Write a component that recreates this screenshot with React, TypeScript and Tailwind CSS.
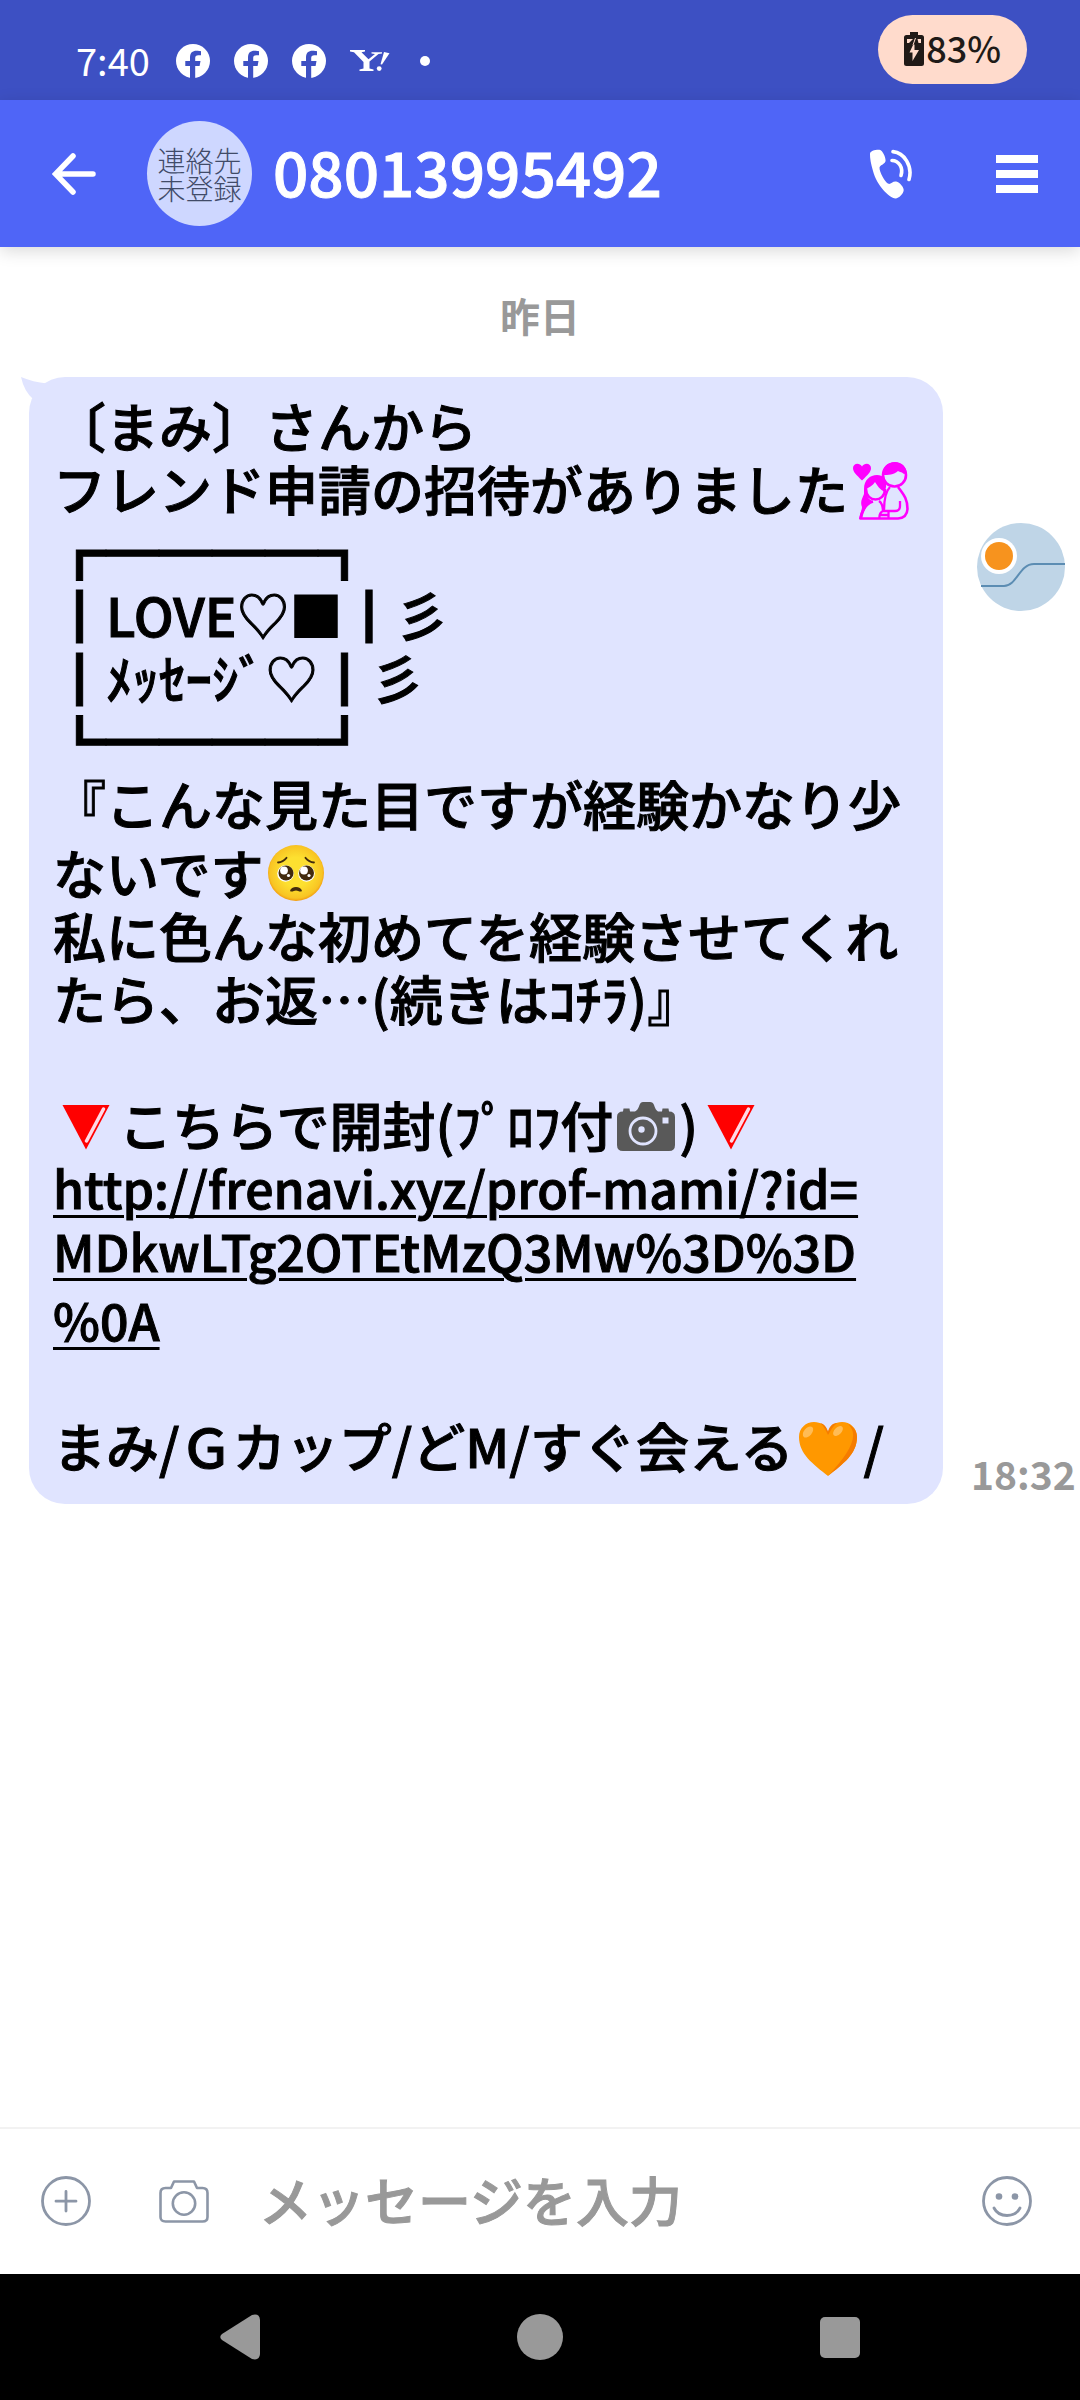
import React from 'react';

function FacebookIcon() {
  return (
    <svg viewBox="0 0 34 34" className="size-[34px]" role="img" aria-label="Facebook">
      <circle cx="17" cy="17" r="17" fill="#fff" />
      <path
        d="M14 34V22H9.300V17H14V13.500C14 8.700 16.500 6.700 20.500 6.700C22.500 6.700 24 6.900 25 7.200V11.300H22.300C20.200 11.300 19.200 12.300 19.200 14V17H24.500L23.600 22H19.200V34Z"
        fill="#3d50c3"
      />
    </svg>
  );
}

function YahooIcon() {
  return (
    <svg viewBox="0 0 40 22" className="h-[22px] w-10" role="img" aria-label="Yahoo">
      <g fill="#fff">
        <path d="M0 0H15V1.600L11.500 2.200L18.500 9.200L25 4L21.500 3.600V2.200H32V3.600L28.500 4L19.500 11.500V18.500L23.500 19.500V21H9.500V19.500L13.500 18.500V12L4 2.200L0 1.600Z" />
        <path d="M34 2L39.500 3.200L32 14.500L30.500 14.200Z" />
        <circle cx="29.200" cy="18.600" r="2.400" />
      </g>
    </svg>
  );
}

function BatteryIcon() {
  return (
    <svg viewBox="0 0 20 34" className="h-[34px] w-5" aria-hidden="true">
      <path d="M6 0H14V3H17.500Q20 3 20 5.500V31.500Q20 34 17.500 34H2.500Q0 34 0 31.500V5.500Q0 3 2.500 3H6Z" fill="#201a17" />
      <path d="M3 7H9L5 11H3ZM13.500 7H17V11H14.500ZM10.500 12.500V18H15L8.500 29V20.500H5.500L9 13Z" fill="#ffdbcc" />
      <path d="M11.500 6L9 13" stroke="#ffdbcc" strokeWidth="1" />
    </svg>
  );
}

function BackIcon() {
  return (
    <svg viewBox="0 0 44 44" className="size-11" fill="none" stroke="#fff" strokeWidth="5.500" strokeLinecap="round" aria-hidden="true">
      <path d="M21 4L3.500 22L21 40M4 22H41" />
    </svg>
  );
}

function CallIcon() {
  return (
    <svg viewBox="0 0 44 50" className="h-[50px] w-11" aria-hidden="true">
      <path
        d="M1 5C1 2 6 .6 10.500 .8C14 1.800 16.500 8 16.600 11.500C16.600 15 11 16 10.500 18.500C10.300 23 16 33.500 19.500 34.800C22 35.500 24 31.500 28 32.800C31 34 34.500 38 34.700 41C34.500 45 30 49 26.500 49.500C20 48.500 8 37 4 22C2 15 .8 9 1 5Z"
        fill="#fff"
      />
      <g fill="none" stroke="#fff" strokeWidth="3.600" strokeLinecap="round">
        <path d="M24 2.600C35 3.500 44 17 40 30.500" />
        <path d="M23 11.500C30 11.500 34.500 19 32 26.500" />
      </g>
    </svg>
  );
}

function MenuIcon() {
  return (
    <svg viewBox="0 0 42 38" className="h-[38px] w-[42px]" fill="#fff" aria-hidden="true">
      <path d="M0 0H42V8H0ZM0 15H42V23H0ZM0 30H42V38H0Z" />
    </svg>
  );
}

function FamilyEmoji() {
  return (
    <svg viewBox="0 0 56 58" className="mt-1 ml-[5px] h-[58px] w-14" role="img" aria-label="couple with heart">
      <path d="M9 18.500C3 12.500 0 10 0 6C0 1 6.500 0 9 4.500C11.500 0 18 1 18 6C18 10 15 12.500 9 18.500Z" fill="#f0f" />
      <circle cx="41.500" cy="13" r="11.500" fill="none" stroke="#f0f" strokeWidth="2.600" />
      <path d="M30 13C29 5 35 0 42 0C49 0 53.500 5 53.500 11L51 12C48 9.500 46 10 45 9C41 13 35 13 30 13Z" fill="#f0f" />
      <path d="M11 27C11 18 17 13 24 13C31 13 34 18 33 25L32 30C27 28 24 23 22 20C20 24 15 25 13 28C13 34 16 38 20 39C14 42 11 48 9 57H6C7 52 9 48 9 45C7 40 9 37 11 32Z" fill="#f0f" />
      <g fill="none" stroke="#f0f" strokeWidth="2.600" strokeLinejoin="round">
        <path d="M13 27C13 41 32 41 32 27" />
        <path d="M20 39.500C12 42 9 48 7.500 56.500H45Q54 56 54.500 47C54.500 38 52 34 45 25" />
        <path d="M37 25C32 30 31 38 31 49M26 39C29 41 30 46 30 50M47 39V44Q47 49 42 49H30Q26 51 26.500 56M26 53H36M35.500 49V56" strokeWidth="2.300" />
      </g>
    </svg>
  );
}

function PleadingEmoji() {
  return (
    <svg viewBox="0 0 56 56" className="mb-[3px] ml-[5px] size-14" role="img" aria-label="pleading face">
      <defs>
        <radialGradient id="face" cx="50%" cy="48%" r="52%">
          <stop offset="0.5" stopColor="#fde030" />
          <stop offset="0.9" stopColor="#f8c423" />
          <stop offset="1" stopColor="#f29b10" />
        </radialGradient>
      </defs>
      <circle cx="28" cy="28" r="28" fill="url(#face)" />
      <g fill="#fff">
        <circle cx="17.500" cy="28.500" r="8.300" />
        <circle cx="38.500" cy="28.500" r="8.300" />
      </g>
      <g fill="#422b0d">
        <circle cx="18" cy="28" r="7.500" />
        <circle cx="38.500" cy="28" r="7.500" />
      </g>
      <g fill="#fff">
        <circle cx="16" cy="25.500" r="3.900" />
        <circle cx="36" cy="25.500" r="3.900" />
        <circle cx="20.500" cy="30.500" r="1.600" />
        <circle cx="41" cy="30.500" r="1.600" />
      </g>
      <path d="M10 17.500Q15 17 18.500 12.800M37.500 12.800Q41 17 46 17.500" fill="none" stroke="#422b0d" strokeWidth="1.800" strokeLinecap="round" />
      <path d="M22 46C23 40.500 33 40.500 34 46C32 47.500 30 45.500 28 45.500C26 45.500 24 47.500 22 46Z" fill="#422b0d" />
    </svg>
  );
}

function TriangleEmoji() {
  return (
    <svg viewBox="0 0 48 46" className="mx-[9px] mt-1 h-[46px] w-12" role="img" aria-label="red triangle pointing down">
      <path d="M.5 1H47.500L24 45.500Z" fill="#f00" />
      <path d="M41.500 5L24.500 37" stroke="#ffd9e6" strokeWidth="3.500" strokeLinecap="round" />
    </svg>
  );
}

function CameraEmoji() {
  return (
    <svg viewBox="0 0 58 49" className="mx-1 mt-1 h-[49px] w-[58px]" role="img" aria-label="camera">
      <path d="M0 15Q0 9.500 6 9.500L6.500 6.500H12.500L13 9.500H18Q21 8 22.500 3Q23.500 0 26 0H33Q36 0 37 3Q38.500 8 41 9.500H45L45.500 6.500H51.500L52 9.500Q58 9.500 58 15V43Q58 49 52 49H6Q0 49 0 43Z" fill="#595959" />
      <circle cx="26" cy="29" r="13" fill="none" stroke="#e0e4ff" strokeWidth="2.800" />
      <circle cx="24.500" cy="27.500" r="3.200" fill="#e0e4ff" />
      <path d="M45.500 15.500H51.500V21.500H45.500Z" fill="#e0e4ff" />
    </svg>
  );
}

function HeartEmoji() {
  return (
    <svg viewBox="0 0 58 54" className="mx-[6px] mt-[6px] h-[54px] w-[58px]" role="img" aria-label="orange heart">
      <path d="M29 54C14 42 0 32 0 15C0 6 7 0 15 0C22 0 27 4 29 10C31 4 36 0 43 0C51 0 58 6 58 15C58 32 44 42 29 54Z" fill="#ff9800" />
      <path d="M49 2C61 13 51 30 29 54C44 42 58 32 58 15C58 9 54 4 49 2ZM29 10C30 5 33 1 38 1C34 4 32 8 29 13C27 9 25 4 21 1C26 2 28 6 29 10Z" fill="#f57c00" />
      <g fill="#ffbc55">
        <ellipse cx="9" cy="10" rx="6.500" ry="4" transform="rotate(-50 9 10)" />
        <ellipse cx="39" cy="9" rx="6" ry="3.500" transform="rotate(-45 39 9)" />
      </g>
    </svg>
  );
}

function AssistBadge() {
  return (
    <svg viewBox="0 0 88 88" className="size-[88px]" aria-hidden="true">
      <circle cx="44" cy="44" r="44" fill="#bfd5e7" />
      <path d="M4 63H27C40 63 42 41 57 41H88" fill="none" stroke="#5c8db3" strokeWidth="2" />
      <circle cx="22" cy="33" r="18" fill="#fff" />
      <circle cx="22" cy="33" r="14" fill="#f7931e" />
    </svg>
  );
}

function PlusIcon() {
  return (
    <svg viewBox="0 0 50 50" className="size-[50px]" fill="none" stroke="#8c96a7" strokeWidth="2.800" strokeLinecap="round" aria-hidden="true">
      <circle cx="25" cy="25" r="23.500" />
      <path d="M25 15.500V35M15 25.200H35" />
    </svg>
  );
}

function CameraIcon() {
  return (
    <svg viewBox="0 0 50 44" className="h-11 w-[50px]" fill="none" stroke="#8c96a7" strokeWidth="2.600" strokeLinejoin="round" aria-hidden="true">
      <path d="M1.500 14Q1.500 9 6.500 9H12L15 2.500H35L38 9H43.500Q48.500 9 48.500 14V38Q48.500 42.500 43.500 42.500H6.500Q1.500 42.500 1.500 38Z" />
      <circle cx="25" cy="24.500" r="11.200" />
    </svg>
  );
}

function SmileIcon() {
  return (
    <svg viewBox="0 0 50 50" className="size-[50px]" fill="none" stroke="#8c96a7" strokeWidth="2.800" strokeLinecap="round" aria-hidden="true">
      <circle cx="25" cy="25" r="23.500" />
      <path d="M12 32C17 42 33 42 38 32" />
      <g fill="#8c96a7" stroke="none">
        <circle cx="17" cy="20.500" r="3.300" />
        <circle cx="33" cy="20.500" r="3.300" />
      </g>
    </svg>
  );
}

function StatusBar() {
  return (
    <div className="flex h-[100px] items-center bg-[#3d50c3] pr-[53px] pl-[76px]">
      <span className="w-[100px] pt-5 text-[38px] leading-10 text-white">7:40</span>
      <div className="flex items-center gap-6 pt-[22px]">
        <FacebookIcon />
        <FacebookIcon />
        <FacebookIcon />
        <YahooIcon />
        <span className="ml-[6px] size-[10px] rounded-full bg-white" />
      </div>
      <div className="mb-[2px] ml-auto flex h-[69px] items-center gap-[2px] rounded-full bg-[#ffdbcc] px-[26px] text-[36px] font-medium text-[#201a17]">
        <BatteryIcon />
        <span className="pb-1">83%</span>
      </div>
    </div>
  );
}

function ChatHeader() {
  return (
    <header className="relative flex h-[147px] items-center bg-[#4f65f7] pr-[42px] pl-[52px] shadow-[0_4px_16px_rgba(0,0,0,0.15)]">
      <button type="button" aria-label="戻る">
        <BackIcon />
      </button>
      <div className="ml-[51px] flex size-[105px] shrink-0 flex-col items-center justify-center rounded-full bg-[#ced7ff] text-[28px] leading-7 font-light text-[#414b68]">
        <span>連絡先</span>
        <span>未登録</span>
      </div>
      <h1 className="ml-[21px] pb-2 text-[62px] leading-none font-medium text-white [-webkit-text-stroke:1px_currentColor]">08013995492</h1>
      <button type="button" aria-label="電話をかける" className="ml-auto">
        <CallIcon />
      </button>
      <button type="button" aria-label="メニュー" className="ml-[83px]">
        <MenuIcon />
      </button>
    </header>
  );
}

function Line({ children }: { children?: React.ReactNode }) {
  return <div className="flex h-[63px] items-center whitespace-pre">{children}</div>;
}

function TallLine({ children }: { children?: React.ReactNode }) {
  return <div className="flex h-[69px] items-end whitespace-pre">{children}</div>;
}

function Message() {
  return (
    <article className="relative min-w-0 flex-1 rounded-[36px] bg-[#e0e4ff] pt-[17px] pb-[27px] pl-6 text-[53px] leading-[63px] font-medium text-black [-webkit-text-stroke:1px_currentColor]">
      <svg viewBox="0 0 26 24" className="absolute top-0 -left-2 h-6 w-[26px]" aria-hidden="true">
        <path d="M0 0Q12 5 26 6.500L12 22Q3 14 0 0Z" fill="#e0e4ff" />
      </svg>
      <Line>〔まみ〕さんから</Line>
      <Line>フレンド申請の招待がありました<FamilyEmoji /></Line>
      <Line>┏━━━━┓</Line>
      <Line>┃LOVE♡■┃彡</Line>
      <Line>┃ﾒｯｾｰｼﾞ♡┃彡</Line>
      <Line>┗━━━━┛</Line>
      <Line>『こんな見た目ですが経験かなり少</Line>
      <TallLine>ないです<PleadingEmoji /></TallLine>
      <Line>私に色んな初めてを経験させてくれ</Line>
      <Line>たら、お返…(続きはｺﾁﾗ)』</Line>
      <Line />
      <Line><TriangleEmoji />こちらで開封(ﾌﾟﾛﾌ付<CameraEmoji />)<TriangleEmoji /></Line>
      <a href="#profile" className="block text-[50px] underline decoration-[3px] underline-offset-[6px]">
        <Line>http://frenavi.xyz/prof-mami/?id=</Line>
        <Line>MDkwLTg2OTEtMzQ3Mw%3D%3D</Line>
        <TallLine>%0A</TallLine>
      </a>
      <Line />
      <Line>まみ/Ｇカップ/どM/すぐ会える<HeartEmoji />/</Line>
    </article>
  );
}

function Composer() {
  return (
    <form className="flex h-[147px] items-center border-t-2 border-[#f2f2f2] bg-white pr-12 pb-[2px] pl-[41px]">
      <button type="button" aria-label="追加">
        <PlusIcon />
      </button>
      <button type="button" aria-label="カメラ" className="ml-[68px]">
        <CameraIcon />
      </button>
      <input
        type="text"
        aria-label="メッセージを入力"
        placeholder="メッセージを入力"
        className="mb-[2px] ml-[50px] min-w-0 flex-1 bg-transparent text-[53px] leading-[63px] font-medium outline-none [-webkit-text-stroke:1px_#999999] placeholder:text-[#999999]"
      />
      <button type="button" aria-label="スタンプ">
        <SmileIcon />
      </button>
    </form>
  );
}

function SystemNav() {
  return (
    <nav className="flex h-[126px] items-center justify-around bg-black px-[90px]">
      <button type="button" aria-label="戻る" className="flex w-12 justify-center">
        <svg viewBox="0 0 40 46" className="h-[46px] w-10" aria-hidden="true">
          <path d="M32 1Q39.500-1 40 6V40Q39.500 47 32 45L2 26Q-1.500 23 2 20Z" fill="#999" />
        </svg>
      </button>
      <button type="button" aria-label="ホーム" className="size-[46px] rounded-full bg-[#999999]" />
      <button type="button" aria-label="履歴" className="flex w-12 justify-center">
        <span className="h-[41px] w-10 rounded-[5px] bg-[#999999]" />
      </button>
    </nav>
  );
}

export default function App() {
  return (
    <div className="flex min-h-screen flex-col bg-white font-['Noto_Sans_CJK_JP',sans-serif]">
      <StatusBar />
      <ChatHeader />
      <main className="flex-1 pt-[38px]">
        <p className="text-center text-[40px] leading-[60px] font-bold text-[#999999]">昨日</p>
        <div className="relative mt-8 flex items-end pl-[29px]">
          <Message />
          <time className="w-[137px] pb-1 pl-7 text-[39px] leading-[54px] font-bold text-[#999999]">18:32</time>
          <button type="button" aria-label="アシスト" className="absolute top-[146px] right-[15px]">
            <AssistBadge />
          </button>
        </div>
      </main>
      <Composer />
      <SystemNav />
    </div>
  );
}
